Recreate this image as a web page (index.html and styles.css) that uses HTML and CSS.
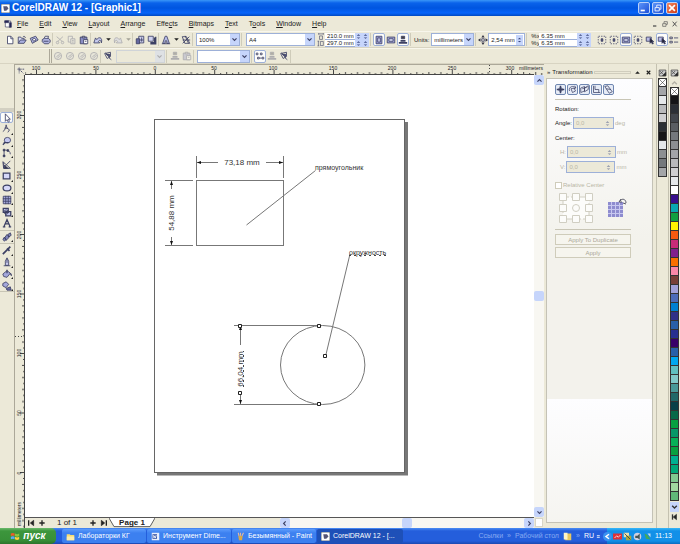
FILE: index.html
```html
<!DOCTYPE html>
<html lang="en">
<head>
<meta charset="utf-8">
<meta name="viewport" content="width=device-width, initial-scale=1">
<title>CorelDRAW 12 - [Graphic1]</title>
<link rel="stylesheet" href="styles.css">
</head>
<body>
<svg class="defs" aria-hidden="true">
  <defs>
    <symbol id="new" viewBox="0 0 12 12"><path d="M3 1.5h4l2.500 2.500v6.500H3z" fill="#fff"/><path d="M7 1.500v3h2.500"/></symbol>
    <symbol id="open" viewBox="0 0 12 12"><path d="M1.500 10V2.500h3l1 1.500h3v2" fill="#d8dcf4"/><path d="M1.500 10 4 6h7l-2.500 4z" fill="#aab0e0"/><path d="M7 2.500c1-1.500 3-1 3 1"/></symbol>
    <symbol id="save" viewBox="0 0 12 12"><path d="M1.500 4 8 1.500 11 6 4 10z" fill="#b4b8e4"/><path d="M4 5l3-1 1.500 2-3 1.500z" fill="#fff"/></symbol>
    <symbol id="print" viewBox="0 0 12 12"><path d="M3.500 5 5 1.500h4L8 5" fill="#fff"/><path d="M1.500 5.500 4 4h5l2 2v2.500L9 10.500H4L1.500 8z" fill="#b0b4e0"/><path d="M3 7.500h6"/></symbol>
    <symbol id="cut" viewBox="0 0 12 12"><path d="M2 2l7 6M9.500 2 3 8"/><circle cx="3" cy="9" r="1.500"/><circle cx="9" cy="9" r="1.500"/></symbol>
    <symbol id="copy" viewBox="0 0 12 12"><path d="M1.500 1.500h5v7h-5z" fill="#eee"/><path d="M4.500 4.500h5v6h-5zM6 6.500h2M6 8.500h2" fill="#ddd"/></symbol>
    <symbol id="paste" viewBox="0 0 12 12"><path d="M1.500 2.500h8v8h-8z" fill="#8a8ec4"/><path d="M4 1.500h3v2H4z" fill="#ccc"/><path d="M5.500 5.500h5v5h-5z" fill="#fff"/><path d="M7 7.500h2"/></symbol>
    <symbol id="undo" viewBox="0 0 12 12"><path d="M1 9.500 3 3.500l1.500 2C7 1.500 12 3 10 9.500c0-3-2-4-3.500-2L8 9.500z" fill="#c6caee"/></symbol>
    <symbol id="import" viewBox="0 0 12 12"><path d="M4.500 1.500h6v8h-6z" fill="#d0d2f0"/><path d="M1.500 4.500h4v6h-4z" fill="#6468a0"/><path d="M6 6h4M8 3v5"/></symbol>
    <symbol id="export" viewBox="0 0 12 12"><path d="M1.500 1.500h6v6h-6z" fill="#d0d2f0"/><path d="M10.500 2v8.500H4M9 3v6H4" stroke-width="1.500"/></symbol>
    <symbol id="launch" viewBox="0 0 12 12"><path d="M2 10 5 1.500h2L10 10H7V7H5v3z" fill="#b8bce8"/><path d="M1 10.500h10"/></symbol>
    <symbol id="web" viewBox="0 0 12 12"><path d="M1.500 2h5l4 8h-6zM10 2 2 10M2 6h9M5 1l4 9"/></symbol>
    <symbol id="ball" viewBox="0 0 12 12"><circle cx="6" cy="6" r="4.300" fill="#dededc"/><path d="M4 7l4-3M5 9l4-4"/></symbol>
    <symbol id="brush" viewBox="0 0 12 12"><path d="M2 3l7-1.500v5L5 9zM3 2l5 6M7 8l3 2.500"/><path d="M4 4h4v3z" fill="#444878"/></symbol>
    <symbol id="portrait" viewBox="0 0 12 12"><path d="M2.500 1.500h7v9h-7z" fill="#9ca0dc"/><path d="M4.500 3.500h3v5h-3z" fill="#d8dafa"/></symbol>
    <symbol id="landscape" viewBox="0 0 12 12"><path d="M1.500 2.500h9v7h-9z" fill="#a8ace0"/><path d="M3.500 4.500h5v3h-5z" fill="#e4e6ff"/></symbol>
    <symbol id="paper-w" viewBox="0 0 12 12"><path d="M2 1.500h8M2 0v3M10 0v3M3.500 5h5v6h-5z"/></symbol>
    <symbol id="paper-h" viewBox="0 0 12 12"><path d="M1.500 2v8M0 2h3M0 10h3M5 2.500h5v7H5z"/></symbol>
    <symbol id="pages" viewBox="0 0 12 12"><path d="M4 1.500h4v3H4z" fill="#444"/><path d="M1 9.500h10M3 7h6" stroke-width="2"/></symbol>
    <symbol id="snap" viewBox="0 0 12 12"><path d="M2 1.500h8M2 10.500h8M1.500 2v8M10.500 2v8" stroke-dasharray="1.500 1.500"/><path d="M5 4.500h2v3H5z" fill="#444878"/></symbol>
    <symbol id="pick" viewBox="0 0 12 12"><path d="M1.500 2.500h6v5h-6z" fill="#babce6"/><path d="M6 4v6l1.500-1.500L9 11l1-1-1.500-2h2z" fill="#223"/></symbol>
    <symbol id="align" viewBox="0 0 12 12"><path d="M1 2.500h3v2H1zM1 7.500h3v2H1zM6 3.500h5M6 8.500h5"/></symbol>
    <symbol id="nudge" viewBox="0 0 12 12"><path d="M6 0l2 3H4zM6 12l2-3H4zM0 6l3-2v4zM12 6 9 4v4z" fill="#334" stroke="none"/><path d="M4.500 4.500h3v3h-3z"/></symbol>
    <symbol id="nodes" viewBox="0 0 12 12"><path d="M1.500 2.500h2v2h-2zM6.500 2.500h2v2h-2zM3 7.500h2v2H3zM8.500 7.500h2v2h-2zM5 8.500h3"/></symbol>
    <symbol id="cursor" viewBox="0 0 12 12"><path d="M4 1v9l2-2 1.500 3 1.500-1-1.500-2.500H10z" fill="#fff"/></symbol>
    <symbol id="shape" viewBox="0 0 12 12"><path d="M1 9C4 8 4 4 5 1l1 4 3 2-2 3M3 5h4"/></symbol>
    <symbol id="lens" viewBox="0 0 12 12"><ellipse cx="6.500" cy="5" rx="3.800" ry="3.300" fill="#c4c8f0"/><path d="M4 7.500 1 10.500M2 8h6" stroke-width="1.500"/></symbol>
    <symbol id="curve" viewBox="0 0 12 12"><path d="M2.500 3v7M4 2.500c4 0 6 2 6 5"/><path d="M1.500 1.500h2v2h-2zM1.500 8.500h2v2h-2zM6 2h2v2H6z" fill="#334"/></symbol>
    <symbol id="smart" viewBox="0 0 12 12"><path d="M1 2l9 8H2zM4 7l6-6M2 3v7h6"/><path d="M3 6l4 4H3z" fill="#334"/></symbol>
    <symbol id="rect" viewBox="0 0 12 12"><path d="M1.500 2.500h8v7h-8z" fill="#d6d8f8" stroke-width="1.500"/></symbol>
    <symbol id="oval" viewBox="0 0 12 12"><ellipse cx="6" cy="6" rx="4.700" ry="3.500" fill="#d6d8f8" stroke-width="1.500"/></symbol>
    <symbol id="grid" viewBox="0 0 12 12"><path d="M1.500 1.500h9v9h-9z" fill="#a8ace0"/><path d="M4.500 1v10M7.500 1v10M1 4.500h10M1 7.500h10"/></symbol>
    <symbol id="shapes" viewBox="0 0 12 12"><path d="M1.500 1.500h6v5h-6zM4.500 5.500h6v5h-6z" fill="#c4c8f0" stroke-width="1.500"/><circle cx="5" cy="6" r="2.500"/></symbol>
    <symbol id="text" viewBox="0 0 12 12"><path d="M1 10.500h3M8 10.500h3M2.500 10 6 2l3.500 8M4 7h4" stroke-width="1.500"/></symbol>
    <symbol id="blend" viewBox="0 0 12 12"><path d="M1 9l2-3 2 3-2 2zM3 7l3-4 3 3-4 4zM7 3l3-2 1 3-3 2z" fill="#8084b8"/></symbol>
    <symbol id="dropper" viewBox="0 0 12 12"><path d="M1 11l6-6M6 4l3 3M7 5l3-3" stroke-width="2"/></symbol>
    <symbol id="pen" viewBox="0 0 12 12"><path d="M6 1 4 5v5h4V5zM6 2v5M2 10.500h8" fill="#c8caee"/></symbol>
    <symbol id="fill" viewBox="0 0 12 12"><path d="M1 6l5-4 4 3-4 5-4-1z" fill="#a4a8dc"/><path d="M6 1v4M10 5l1.500 3" stroke-width="1.500"/></symbol>
    <symbol id="mesh" viewBox="0 0 12 12"><path d="M1 3l4-2 3 3-3 4-4-2z" fill="#a4a8dc"/><path d="M5 9l5-2 1 4H6z" fill="#686ca8"/></symbol>
    <symbol id="plus" viewBox="0 0 12 12"><path d="M6 2v8M2 6h8" stroke-width="2"/></symbol>
    <symbol id="move" viewBox="0 0 12 12"><path d="M6 1v10M1 6h10" stroke-width="2"/><path d="M4 4h4v4H4z"/></symbol>
    <symbol id="turn" viewBox="0 0 12 12"><path d="M2 8C0 2 8 0 10 4M9 1l1.500 3-3 1M4 5l4-1 2 4-4 2z"/></symbol>
    <symbol id="scale" viewBox="0 0 12 12"><path d="M1 4l5-2v6l-5 2zM6 4l5-3v5L6 9zM3 5l6-2"/></symbol>
    <symbol id="size" viewBox="0 0 12 12"><path d="M2 1v9h9M4 1v5h5v4"/></symbol>
    <symbol id="skew" viewBox="0 0 12 12"><path d="M1 2l4-1 6 8-4 2zM3 5l6 1"/></symbol>
    <symbol id="down" viewBox="0 0 12 12"><path d="M2.500 4 6 7.500 9.500 4" stroke-width="2"/></symbol>
    <symbol id="tri" viewBox="0 0 12 12"><path d="M2 4h8L6 8z" fill="#222" stroke="none"/></symbol>
    <symbol id="flyout" viewBox="0 0 12 12"><path d="M1 1.500h10v9H1zM2 3l5 5M7 3 2 8" fill="#ccc"/><path d="M6 10h5V5z" fill="#222"/></symbol>
    <symbol id="none" viewBox="0 0 12 12"><path d="M0 0l12 12M12 0 0 12"/></symbol>
    <symbol id="app" viewBox="0 0 12 12"><path d="M0 0h12v12H0z" fill="#fff" stroke="#345"/><path d="M3 3h5l2 3-3 3H4z" fill="#557" stroke="none"/></symbol>
    <symbol id="spin" viewBox="0 0 12 12"><path d="M3 4.500 6 2l3 2.500zM3 7.500 6 10l3-2.500z" fill="#3c4a80" stroke="none"/></symbol>
  </defs>
</svg>

<header class="titlebar">
  <svg class="app-icon"><use href="#app"/></svg>
  <h1>CorelDRAW 12 - [Graphic1]</h1>
  <div class="window-buttons">
    <button aria-label="Minimize"><svg viewBox="0 0 12 12"><path d="M2 9h5" stroke-width="2"/></svg></button>
    <button aria-label="Restore"><svg viewBox="0 0 12 12"><path d="M4.500 5V2.500h5v5H7.500M2.500 5.500h5v4h-5z"/></svg></button>
    <button class="close" aria-label="Close"><svg viewBox="0 0 12 12"><path d="M2.500 2.500l7 7M9.500 2.500l-7 7" stroke-width="2"/></svg></button>
  </div>
</header>

<nav class="menubar">
  <svg class="icon doc-icon" viewBox="0 0 12 12"><path d="M2 1.500h8v9H2z" fill="#fff"/><path d="M1 1h6v3H1zM8 4h3v7H8z" fill="#225"/></svg>
  <a href="#"><u>F</u>ile</a><a href="#"><u>E</u>dit</a><a href="#"><u>V</u>iew</a><a href="#"><u>L</u>ayout</a><a href="#"><u>A</u>rrange</a><a href="#">Effe<u>c</u>ts</a><a href="#"><u>B</u>itmaps</a><a href="#"><u>T</u>ext</a><a href="#">T<u>o</u>ols</a><a href="#"><u>W</u>indow</a><a href="#"><u>H</u>elp</a>
  <div class="mdi-buttons">
    <button aria-label="Minimize document"><svg class="icon" viewBox="0 0 12 12"><path d="M3 9h5" stroke-width="2"/></svg></button>
    <button aria-label="Restore document"><svg class="icon" viewBox="0 0 12 12"><path d="M4.500 5V2.500h5v4H7.500M2.500 5.500h5v4h-5z"/></svg></button>
    <button aria-label="Close document"><svg class="icon" viewBox="0 0 12 12"><path d="M2.500 2.500l6 7M8.500 2.500l-6 7" stroke-width="1.500"/></svg></button>
  </div>
</nav>

<div class="toolbar">
  <button aria-label="New"><svg class="icon"><use href="#new"/></svg></button>
  <button aria-label="Open"><svg class="icon"><use href="#open"/></svg></button>
  <button aria-label="Save"><svg class="icon"><use href="#save"/></svg></button>
  <button aria-label="Print"><svg class="icon"><use href="#print"/></svg></button>
  <i class="sep"></i>
  <button class="off" aria-label="Cut"><svg class="icon"><use href="#cut"/></svg></button>
  <button class="off" aria-label="Copy"><svg class="icon"><use href="#copy"/></svg></button>
  <button aria-label="Paste"><svg class="icon"><use href="#paste"/></svg></button>
  <i class="sep"></i>
  <button aria-label="Undo"><svg class="icon"><use href="#undo"/></svg></button>
  <button class="narrow" aria-label="Undo list"><svg class="icon"><use href="#tri"/></svg></button>
  <button class="off flip" aria-label="Redo"><svg class="icon"><use href="#undo"/></svg></button>
  <button class="narrow off" aria-label="Redo list"><svg class="icon"><use href="#tri"/></svg></button>
  <i class="sep"></i>
  <button aria-label="Import"><svg class="icon"><use href="#import"/></svg></button>
  <button aria-label="Export"><svg class="icon"><use href="#export"/></svg></button>
  <i class="sep"></i>
  <button aria-label="Application launcher"><svg class="icon"><use href="#launch"/></svg></button>
  <button class="narrow" aria-label="Launcher list"><svg class="icon"><use href="#tri"/></svg></button>
  <button aria-label="Corel on the web"><svg class="icon"><use href="#web"/></svg></button>
  <i class="sep"></i>
  <label class="combo zoom"><select aria-label="Zoom level"><option>100%</option></select><span><svg class="icon"><use href="#down"/></svg></span></label>
  <i class="sep gap"></i>
  <label class="combo paper"><select aria-label="Paper type"><option>A4</option></select><span><svg class="icon"><use href="#down"/></svg></span></label>
  <div class="stack">
    <label><svg class="icon"><use href="#paper-w"/></svg><input value="210.0 mm" aria-label="Paper width"><svg class="spin"><use href="#spin"/></svg><svg class="spin"><use href="#spin"/></svg></label>
    <label><svg class="icon"><use href="#paper-h"/></svg><input value="297.0 mm" aria-label="Paper height"><svg class="spin"><use href="#spin"/></svg><svg class="spin"><use href="#spin"/></svg></label>
  </div>
  <i class="sep gap"></i>
  <button class="pressed" aria-label="Portrait"><svg class="icon"><use href="#portrait"/></svg></button>
  <button aria-label="Landscape"><svg class="icon"><use href="#landscape"/></svg></button>
  <button class="pressed" aria-label="Default page"><svg class="icon"><use href="#pages"/></svg></button>
  <i class="sep gap"></i>
  <label class="caption" for="units">Units:</label>
  <div class="combo units"><select id="units"><option>millimeters</option></select><span><svg class="icon"><use href="#down"/></svg></span></div>
  <i class="sep gap"></i>
  <label class="nudge"><svg class="icon"><use href="#nudge"/></svg><span class="field"><input value="2,54 mm" aria-label="Nudge offset"><svg class="spin"><use href="#spin"/></svg></span></label>
  <i class="sep gap"></i>
  <div class="stack wide">
    <label><span class="axis">%x</span><input value="6.35 mm" aria-label="Duplicate distance x"><svg class="spin"><use href="#spin"/></svg><svg class="spin"><use href="#spin"/></svg></label>
    <label><span class="axis">%y</span><input value="6.35 mm" aria-label="Duplicate distance y"><svg class="spin"><use href="#spin"/></svg><svg class="spin"><use href="#spin"/></svg></label>
  </div>
  <div class="tail">
    <button aria-label="Snap to grid"><svg class="icon"><use href="#snap"/></svg></button>
    <button aria-label="Snap to guidelines"><svg class="icon"><use href="#snap"/></svg></button>
    <button class="pressed" aria-label="Snap to objects"><svg class="icon"><use href="#landscape"/></svg></button>
    <button aria-label="Dynamic guides"><svg class="icon"><use href="#snap"/></svg></button>
    <button aria-label="Draw complex objects"><svg class="icon"><use href="#pick"/></svg></button>
    <button class="pressed" aria-label="Treat as filled"><svg class="icon"><use href="#pick"/></svg></button>
    <button aria-label="Options"><svg class="icon"><use href="#align"/></svg></button>
  </div>
</div>

<div class="toolbar second">
  <div class="empty"></div>
  <button class="off" aria-label="Fill color"><svg class="icon"><use href="#ball"/></svg></button>
  <button class="off" aria-label="Outline color"><svg class="icon"><use href="#ball"/></svg></button>
  <button class="off" aria-label="Contour"><svg class="icon"><use href="#ball"/></svg></button>
  <button class="off" aria-label="Shadow"><svg class="icon"><use href="#ball"/></svg></button>
  <i class="sep"></i>
  <button aria-label="Brush"><svg class="icon"><use href="#brush"/></svg></button>
  <label class="combo preset off"><select aria-label="Preset" disabled><option></option></select><span><svg class="icon"><use href="#down"/></svg></span></label>
  <i class="sep gap"></i>
  <button class="off" aria-label="Add preset"><svg class="icon"><use href="#pages"/></svg></button>
  <button class="off" aria-label="Delete preset"><svg class="icon"><use href="#paste"/></svg></button>
  <i class="sep"></i>
  <label class="combo style"><select aria-label="Style"><option></option></select><span><svg class="icon"><use href="#down"/></svg></span></label>
  <i class="sep gap"></i>
  <button class="pressed" aria-label="Node labels"><svg class="icon"><use href="#nodes"/></svg></button>
  <button class="off" aria-label="Break link"><svg class="icon"><use href="#pages"/></svg></button>
  <button aria-label="Edit link"><svg class="icon"><use href="#brush"/></svg></button>
  <i class="sep"></i>
</div>

<main class="workspace">
  <aside class="toolbox">
    <div class="handle"></div>
    <div class="tools">
      <button class="pressed" aria-label="Pick"><svg class="icon"><use href="#cursor"/></svg></button>
      <button class="more" aria-label="Shape"><svg class="icon"><use href="#shape"/></svg></button>
      <button class="more" aria-label="Zoom"><svg class="icon"><use href="#lens"/></svg></button>
      <button class="more" aria-label="Freehand"><svg class="icon"><use href="#curve"/></svg></button>
      <button aria-label="Smart drawing"><svg class="icon"><use href="#smart"/></svg></button>
      <button class="more" aria-label="Rectangle"><svg class="icon"><use href="#rect"/></svg></button>
      <button class="more" aria-label="Ellipse"><svg class="icon"><use href="#oval"/></svg></button>
      <button class="more" aria-label="Graph paper"><svg class="icon"><use href="#grid"/></svg></button>
      <button class="more" aria-label="Basic shapes"><svg class="icon"><use href="#shapes"/></svg></button>
      <button aria-label="Text"><svg class="icon"><use href="#text"/></svg></button>
      <hr>
      <button class="more" aria-label="Interactive blend"><svg class="icon"><use href="#blend"/></svg></button>
      <hr>
      <button class="more" aria-label="Eyedropper"><svg class="icon"><use href="#dropper"/></svg></button>
      <button class="more" aria-label="Outline"><svg class="icon"><use href="#pen"/></svg></button>
      <button class="more" aria-label="Fill"><svg class="icon"><use href="#fill"/></svg></button>
      <button class="more" aria-label="Interactive fill"><svg class="icon"><use href="#mesh"/></svg></button>
    </div>
    <hr>
  </aside>

  <section class="document">
    <div class="origin"><svg class="icon" viewBox="0 0 12 12"><path d="M5 3v7M3 5h8M5 5l5 5" stroke-dasharray="2 1"/></svg></div>
    <svg class="ruler-top" aria-label="Horizontal ruler">
      <defs>
        <pattern id="ticks-x" x="11" width="59.400" height="10" patternUnits="userSpaceOnUse">
          <path d="M.5 5v5M6.500 8v2M12.500 7v3M18.500 8v2M24.500 7v3M30.500 8v2M36.500 7v3M42.500 8v2M48.500 7v3M54.500 8v2"/>
        </pattern>
      </defs>
      <rect width="100%" height="10" fill="url(#ticks-x)"/>
      <path d="M464.500 0v10" stroke-dasharray="1 2"/>
      <path d="M0 9.500h509"/>
      <g><text x="11" y="5">100</text><text x="71" y="5">50</text><text x="130" y="5">0</text><text x="189" y="5">50</text><text x="248" y="5">100</text><text x="308" y="5">150</text><text x="367" y="5">200</text><text x="427" y="5">250</text><text x="485" y="5">300</text><text x="506" y="5">millimeters</text></g>
    </svg>
    <svg class="ruler-left" aria-label="Vertical ruler">
      <defs>
        <pattern id="ticks-y" y="40" width="10" height="59.500" patternUnits="userSpaceOnUse">
          <path d="M5 .5h5M8 6.500h2M7 12.500h3M8 18.500h2M7 24.500h3M8 30.500h2M7 36.500h3M8 42.500h2M7 48.500h3M8 54.500h2"/>
        </pattern>
      </defs>
      <rect width="10" height="100%" fill="url(#ticks-y)"/>
      <path d="M0 261.500h10" stroke-dasharray="1 2"/>
      <path d="M9.500 0v2000"/>
      <g transform="rotate(-90)"><text x="-40" y="6">300</text><text x="-100" y="6">250</text><text x="-160" y="6">200</text><text x="-219" y="6">150</text><text x="-278" y="6">100</text><text x="-338" y="6">50</text><text x="-398" y="6">0</text><text x="-439" y="6">millimeters</text></g>
    </svg>

    <svg class="canvas" aria-label="Drawing page">
      <g transform="translate(-25 -75)">
        <path class="shadow" d="M157 474h249.500V122"/>
        <rect class="page" x="154.500" y="119.500" width="250" height="353"/>
        <g class="ink">
          <rect x="196.500" y="180.500" width="87" height="65"/>
          <path d="M196.500 156v22M283.500 156v22M197 162.500h21M266 162.500h18M165 180.500h28M165 245.500h28M171.500 181v8M171.500 237v8"/>
          <path class="solid" d="M197 162.500l4-1.500v3zM283 162.500l-4-1.500v3zM171.500 181l-1.500 4h3zM171.500 245l-1.500-4h3z"/>
          <path d="M315.500 170.500 246.500 225"/>
          <ellipse cx="322.700" cy="365" rx="42.200" ry="39.500"/>
          <path d="M234 325.500h85M234 404.500h85M240.500 327v18M240.500 393v11M325.500 356.500 350 254"/>
          <path class="solid" d="M240.500 326l-1.500 4h3zM240.500 404l-1.500-4h3z"/>
          <path class="node" d="M238.500 324.500h3v3h-3zM317.500 324.500h3v3h-3zM317.500 402.500h3v3h-3zM238.500 391.500h3v3h-3zM323.500 354.500h3v3h-3z"/>
        </g>
        <text class="size" x="242" y="165">73,18 mm</text>
        <text class="size" transform="translate(174 213) rotate(-90)">54,88 mm</text>
        <text class="size" transform="translate(243 369) rotate(-90)">66,04 mm</text>
        <text class="note" x="315" y="170">прямоугольник</text>
        <text class="note" x="349" y="255">окружность</text>
        <path class="marks" d="M349 255.500h40M243.500 387v-36"/>
      </g>
    </svg>

    <div class="scroll vertical">
      <button aria-label="Scroll up"><svg class="icon up"><use href="#down"/></svg></button>
      <i class="thumb"></i>
      <button aria-label="Scroll down"><svg class="icon"><use href="#down"/></svg></button>
    </div>

    <footer class="pages">
      <button aria-label="First page"><svg class="icon" viewBox="0 0 12 12"><path d="M2.500 2v8" stroke-width="2"/><path d="M10 2v8L5 6z" fill="#222"/></svg></button>
      <button aria-label="Add page before"><svg class="icon"><use href="#plus"/></svg></button>
      <span class="count">1 of 1</span>
      <button aria-label="Add page after"><svg class="icon"><use href="#plus"/></svg></button>
      <button aria-label="Last page"><svg class="icon" viewBox="0 0 12 12"><path d="M9.500 2v8" stroke-width="2"/><path d="M2 2v8l5-4z" fill="#222"/></svg></button>
      <button class="tab"><svg viewBox="0 0 46 11" preserveAspectRatio="none"><path d="M0 0l5 9.500h36L46 0" fill="#fff"/></svg><span>Page 1</span></button>
      <div class="scroll horizontal">
        <button aria-label="Scroll left"><svg class="icon left"><use href="#down"/></svg></button>
        <i class="thumb"></i>
        <button aria-label="Scroll right"><svg class="icon right"><use href="#down"/></svg></button>
      </div>
    </footer>
    <button class="navigator" aria-label="Navigator"></button>
  </section>

  <aside class="docker">
    <header><span>»</span><h2>Transformation</h2><i></i>
      <button aria-label="Collapse"><svg class="icon up"><use href="#tri"/></svg></button>
      <button aria-label="Close docker"><svg class="icon" viewBox="0 0 12 12"><path d="M3 3l6 6M9 3 3 9" stroke-width="2"/></svg></button>
    </header>
    <form class="panel">
      <div class="kinds">
        <button type="button" aria-label="Position"><svg class="icon"><use href="#move"/></svg></button>
        <button type="button" aria-label="Rotate"><svg class="icon"><use href="#turn"/></svg></button>
        <button type="button" aria-label="Scale and mirror"><svg class="icon"><use href="#scale"/></svg></button>
        <button type="button" aria-label="Size"><svg class="icon"><use href="#size"/></svg></button>
        <button type="button" aria-label="Skew"><svg class="icon"><use href="#skew"/></svg></button>
      </div>
      <hr>
      <h3>Rotation:</h3>
      <div class="row"><label for="angle">Angle:</label><span class="field"><input id="angle" value="0,0" disabled><svg class="spin"><use href="#spin"/></svg></span><span class="dim">deg</span></div>
      <h3>Center:</h3>
      <div class="row inset"><label class="dim" for="ch">H:</label><span class="field"><input id="ch" value="0,0" disabled><svg class="spin"><use href="#spin"/></svg></span><span class="dim">mm</span></div>
      <div class="row inset"><label class="dim" for="cv">V:</label><span class="field"><input id="cv" value="0,0" disabled><svg class="spin"><use href="#spin"/></svg></span><span class="dim">mm</span></div>
      <label class="check dim"><input type="checkbox" disabled>Relative Center</label>
      <div class="anchor">
        <svg class="anchors" viewBox="0 0 34 30" aria-label="Anchor points"><path d="M4 4h26v22H4z" stroke-dasharray="6 2"/><path d="M.5.5h7v7h-7zM13.500.5h7v7h-7zM26.500.5h7v7h-7zM.5 11.500h7v7h-7zM26.500 11.500h7v7h-7zM.5 22.500h7v7h-7zM13.500 22.500h7v7h-7zM26.500 22.500h7v7h-7z"/><circle cx="17" cy="15" r="3.500"/></svg>
        <svg class="preview" viewBox="0 0 20 20" aria-hidden="true"><path d="M1 4h15v15H1z" fill="#8e8ccf"/><path class="mesh" d="M1 7.500h15M1 11.500h15M1 15.500h15M4.500 4v15M8.500 4v15M12.500 4v15"/><path d="M13 3c2-3 6-2 6 2M19 6l-3-1M14 1l-2 3h3" stroke="#556"/></svg>
      </div>
      <hr>
      <button class="apply" type="button" disabled>Apply To Duplicate</button>
      <button class="apply" type="button" disabled>Apply</button>
    </form>
  </aside>

  <aside class="palette short">
    <button aria-label="Document palette menu"><svg class="icon"><use href="#flyout"/></svg></button>
    <ul>
      <li class="c-none"><svg><use href="#none"/></svg></li><li class="g7"></li><li class="g10"></li><li class="g8"></li><li class="g9"></li><li class="g2"></li><li class="g1"></li><li class="g10"></li><li class="g6"></li><li class="g5"></li><li class="g7"></li>
    </ul>
  </aside>
  <aside class="palette">
    <button aria-label="Default palette menu"><svg class="icon"><use href="#flyout"/></svg></button>
    <button class="scroll-up" aria-label="Palette up"><svg class="icon up"><use href="#down"/></svg></button>
    <ul>
      <li class="c-none"><svg><use href="#none"/></svg></li>
      <li class="g1"></li><li class="g2"></li><li class="g3"></li><li class="g4"></li><li class="g5"></li><li class="g6"></li><li class="g7"></li><li class="g8"></li><li class="g9"></li><li class="g10"></li><li class="white"></li>
      <li class="indigo"></li><li class="cyan"></li><li class="green"></li><li class="yellow"></li><li class="red"></li><li class="magenta"></li><li class="purple"></li><li class="orange"></li><li class="pink"></li><li class="brown"></li><li class="lavender"></li>
      <li class="b1"></li><li class="b2"></li><li class="b3"></li><li class="b4"></li><li class="b5"></li><li class="b6"></li><li class="b4"></li><li class="b7"></li>
      <li class="t1"></li><li class="t2"></li><li class="t3"></li><li class="t4"></li><li class="t5"></li><li class="t6"></li>
      <li class="e1"></li><li class="e2"></li><li class="e3"></li><li class="e1"></li><li class="e4"></li><li class="e5"></li><li class="e6"></li><li class="e7"></li><li class="e8"></li>
    </ul>
    <button class="blue" aria-label="Palette down"><svg class="icon"><use href="#down"/></svg></button>
    <button aria-label="Expand palette"><svg class="icon" viewBox="0 0 12 12"><path d="M3 2v8" stroke-width="2"/><path d="M9 2v8L4 6z" fill="#222"/></svg></button>
  </aside>
</main>

<footer class="taskbar">
  <button class="start"><svg viewBox="0 0 12 12" aria-hidden="true"><path d="M1 3c2-1 3-1 4.500 0v3C4 5 3 5 1 6z" fill="#f05a28"/><path d="M6 3c2 1 3 1 5 0v3c-2 1-3 1-5 0z" fill="#8cc63f"/><path d="M1 7c2-1 3-1 4.500 0v3C4 9 3 9 1 10z" fill="#58a8f8"/><path d="M6 7c2 1 3 1 5 0v3c-2 1-3 1-5 0z" fill="#fcd13a"/></svg>пуск</button>
  <button class="task"><svg viewBox="0 0 12 12" aria-hidden="true"><path d="M1 3h4l1 1h5v7H1z" fill="#f8dc70"/><path d="M1 6h10v5H1z" fill="#fcecaa"/></svg>Лабораторки КГ</button>
  <button class="task"><svg viewBox="0 0 12 12" aria-hidden="true"><path d="M1 1h10v10H1z" fill="#e8eefc"/><path d="M2 3h6v6H2z" fill="#2c4aa0"/><path d="M3 4l1 4 1-3 1 3 1-4" fill="none" stroke="#fff"/></svg>Инструмент Dime...</button>
  <button class="task"><svg viewBox="0 0 12 12" aria-hidden="true"><path d="M3 5h6l-1 6H4z" fill="#d8a848"/><path d="M4 5 3 1M6 5V1M8 5l2-4" fill="none" stroke="#e0b8a0" stroke-width="1.500"/></svg>Безымянный - Paint</button>
  <button class="task active"><svg aria-hidden="true"><use href="#app"/></svg>CorelDRAW 12 - [...</button>
  <div class="bars"><span>Ссылки</span><span>»</span><span>Рабочий стол</span><svg viewBox="0 0 12 12" aria-hidden="true"><path d="M3 2h8v9H3z" fill="#e8c860"/><path d="M1 1h5v9H1z" fill="#fff4c8"/></svg><span>»</span></div>
  <span class="lang">RU</span>
  <svg class="lang-mark" viewBox="0 0 12 12" aria-hidden="true"><path d="M2 4h7M2 8h7" fill="none" stroke="#fff" stroke-width="2"/></svg>
  <div class="tray">
    <svg class="round" viewBox="0 0 12 12" aria-hidden="true"><circle cx="6" cy="6" r="6" fill="#3a92f0"/><path d="M8 3 4 6l4 3" fill="none" stroke="#fff" stroke-width="2"/></svg>
    <svg viewBox="0 0 12 12" aria-hidden="true"><path d="M0 2h12v8H0z" fill="#dc3038"/><path d="M2 8l3-3 2 2 3-3" fill="none" stroke="#fff"/></svg>
    <svg viewBox="0 0 12 12" aria-hidden="true"><path d="M1 1h7v6H1z" fill="#e8e0b0"/><path d="M4 5h7v6H4z" fill="#a8a840"/><path d="M2 2l8 8" stroke="#333"/></svg>
    <svg viewBox="0 0 12 12" aria-hidden="true"><circle cx="6" cy="6" r="5" fill="#d0d0e0"/><path d="M3 5h3l3-3v8L6 8H3z" fill="#455"/></svg>
    <svg viewBox="0 0 12 12" aria-hidden="true"><path d="M2 2l4 2 4 6-6-1z" fill="#44a858"/><path d="M6 2h4v5z" fill="#cde"/></svg>
    <time>11:13</time>
  </div>
</footer>
</body>
</html>
```
FILE: styles.css
```css
:root {
  --face: #ece9d8;
  --line: #aca899;
  --blue-edge: #9db0d8;
  --scroll: #c6d5fb;
  --dim: #b9b6a6;
}

* { box-sizing: border-box; }

body {
  margin: 0;
  min-height: 100vh;
  display: flex;
  flex-direction: column;
  overflow: hidden;
  background: var(--face);
  color: #222;
  font: 6px/8px "Liberation Sans", Arial, sans-serif;
}

.defs { position: absolute; width: 0; height: 0; }

button, input, select {
  margin: 0;
  padding: 0;
  border: 0;
  border-radius: 0;
  background: none;
  color: inherit;
  font: inherit;
}

button {
  display: flex;
  align-items: center;
  justify-content: center;
  flex: none;
}

svg { display: block; flex: none; }
h1, h2, h3, ul { margin: 0; padding: 0; font: inherit; }
a { color: inherit; text-decoration: none; }
hr { margin: 0; border: 0; border-top: 1px solid #c8c5b5; }

.icon {
  width: 10px;
  height: 10px;
  fill: none;
  stroke: #3c4064;
}

.up { transform: rotate(180deg); }
.left { transform: rotate(90deg); }
.right { transform: rotate(-90deg); }
.flip .icon { transform: scaleX(-1); }
.off { opacity: .35; }

/* Title and menu */
.titlebar {
  height: 16px;
  display: flex;
  align-items: center;
  gap: 2px;
  padding: 0 2px 0 1px;
  background: linear-gradient(#3a96f8 0, #0a62ea 3px, #0055e0 8px, #0664fa 13px, #0048c0 16px);
  color: #fff;
}
.titlebar h1 { font-size: 10px; line-height: 14px; font-weight: bold; }
.app-icon { width: 9px; height: 9px; }
.window-buttons { margin-left: auto; display: flex; gap: 2px; }
.window-buttons button {
  width: 12px;
  height: 12px;
  border: 1px solid #b8d0f8;
  border-radius: 2px;
  background: linear-gradient(135deg, #5c94f8, #1c50d8);
}
.window-buttons .close { background: linear-gradient(135deg, #f08860, #d03c18); }
.window-buttons svg { width: 10px; height: 10px; fill: none; stroke: #fff; }

.menubar {
  height: 15px;
  display: flex;
  align-items: center;
  gap: 11px;
  padding: 0 0 0 4px;
  font-size: 7px;
}
.menubar .doc-icon { width: 8px; margin-right: -6px; }
.mdi-buttons { margin-left: auto; display: flex; }
.mdi-buttons button { width: 10px; }
.mdi-buttons .icon { width: 8px; height: 8px; stroke: #555; }

/* Toolbars */
.toolbar {
  height: 17px;
  display: flex;
  align-items: center;
  padding-left: 4px;
  border-top: 1px solid #f8f6ec;
  border-bottom: 1px solid #d8d4c2;
}
.toolbar button { width: 12px; height: 13px; }
.toolbar .narrow { width: 8px; }
.narrow .icon { width: 7px; height: 7px; }
.toolbar.second { height: 16px; padding-left: 0; }
.second .empty { width: 52px; height: 14px; border-right: 3px double var(--line); }
.sep { flex: none; width: 2px; height: 13px; border-left: 1px solid #cfccba; }
.sep.gap { margin: 0 1px; }

.pressed {
  border: 1px solid var(--blue-edge);
  border-radius: 2px;
  background: #fdfdfb;
}

.combo {
  flex: none;
  display: flex;
  height: 13px;
  margin-left: 2px;
  border: 1px solid var(--blue-edge);
  background: #fff;
}
.combo select { flex: 1; min-width: 0; padding-left: 2px; appearance: none; }
.combo span { flex: none; width: 9px; display: flex; align-items: center; justify-content: center; background: var(--scroll); }
.combo .icon { width: 7px; height: 7px; }
.zoom { width: 44px; }
.paper { width: 69px; }
.units { width: 43px; }
.preset { width: 49px; background: none; }
.style { width: 53px; }

.stack { flex: none; width: 52px; margin-left: 2px; }
.stack.wide { width: 60px; }
.stack label { display: flex; align-items: center; height: 7px; }
.stack .icon { width: 8px; height: 7px; }
.stack input { flex: 1; min-width: 0; height: 7px; padding-left: 2px; background: #fff; border-bottom: 1px solid var(--blue-edge); }
.axis { width: 8px; }
.spin { width: 7px; height: 7px; background: var(--scroll); }
.caption { margin-left: 1px; }
.nudge { display: flex; align-items: center; }
.field { display: flex; align-items: center; height: 13px; padding-right: 1px; border: 1px solid var(--blue-edge); background: #fff; }
.field input { flex: 1; min-width: 0; padding-left: 2px; }
.nudge .field { width: 37px; }
.nudge .field .spin { height: 10px; }
.tail { display: flex; margin-left: auto; }

/* Workspace */
.workspace { flex: 1; display: flex; min-height: 0; }

.toolbox { flex: none; width: 14px; padding-top: 44px; }
.handle { height: 4px; background: #d3d0c2; }
.tools { display: flex; flex-direction: column; justify-content: space-between; height: 179px; }
.tools button { position: relative; width: 13px; height: 11px; }
.tools .more::after {
  content: "";
  position: absolute;
  right: 0;
  bottom: 0;
  border: 1px solid #222;
  border-top-color: transparent;
  border-left-color: transparent;
}

.document {
  flex: 1;
  min-width: 0;
  display: grid;
  grid-template: 10px minmax(0, 1fr) 11px / 10px minmax(0, 1fr) 10px;
  border-top: 1px solid var(--line);
  border-left: 1px solid var(--line);
}
.ruler-top { grid-column: 2 / 4; width: 100%; height: 10px; }
.ruler-left { grid-row: 2 / 4; width: 10px; height: 100%; }
.ruler-top path, .ruler-left path { stroke: #444; fill: none; }
.ruler-top text, .ruler-left text { font-size: 5px; text-anchor: middle; fill: #222; }

.canvas { width: 100%; height: 100%; background: #fff; overflow: hidden; }
.page { fill: #fff; stroke: #666; }
.shadow { fill: none; stroke: #777; stroke-width: 3; }
.ink { fill: none; stroke: #777; }
.ink .solid { fill: #111; stroke: none; }
.ink .node { fill: #fff; stroke: #222; }
.marks { stroke: #444; stroke-dasharray: 2 3; }
.size { font-size: 8px; text-anchor: middle; fill: #333; }
.note { font-size: 7px; fill: #333; }

.scroll { display: flex; justify-content: space-between; align-items: center; background: #f8f7f2; }
.scroll button { width: 10px; height: 10px; border-radius: 2px; background: var(--scroll); }
.scroll .icon { width: 7px; height: 7px; }
.thumb { width: 10px; height: 10px; border-radius: 2px; background: var(--scroll); }
.vertical { flex-direction: column; }

.pages { display: flex; align-items: center; min-width: 0; border-top: 1px solid #555; font-size: 8px; }
.pages > button .icon { width: 8px; height: 8px; stroke: #222; }
.pages > button { width: 11px; height: 10px; }
.count { width: 40px; text-align: center; }
.pages .tab { position: relative; width: 46px; font-weight: bold; }
.tab svg { position: absolute; inset: 0; width: 100%; height: 100%; stroke: #555; }
.tab span { position: relative; }
.horizontal { width: 50%; margin-left: auto; height: 10px; }
.navigator { margin: 1px; background: #fff; border: 1px solid #d8d5c8; }

/* Docker */
.docker { flex: none; width: 112px; padding: 2px 3px 5px 2px; display: flex; flex-direction: column; }
.docker header { height: 12px; display: flex; align-items: center; gap: 2px; padding-left: 1px; }
.docker header i { flex: 1; height: 3px; border: 1px solid #d0cdbd; }
.docker header button { width: 9px; }
.docker header .icon { width: 7px; height: 7px; stroke: #222; }
.panel {
  flex: 1;
  padding: 5px 21px 0 8px;
  border: 1px solid #c4c2b6;
  background: linear-gradient(#fdfdff, #f3f2ec 50%) 0 0 / 100% 320px;
}
.kinds { display: flex; gap: 1px; margin-bottom: 4px; }
.kinds button { width: 11px; height: 11px; border: 1px solid #6f86b0; border-radius: 2px; background: #e6ebf6; }
.kinds .icon { width: 9px; height: 9px; }
.panel h3 { margin: 5px 0 4px; }
.row { display: flex; align-items: center; gap: 1px; }
.row .field { width: 41px; height: 12px; background: var(--face); color: var(--dim); }
.row .spin { width: 9px; background: none; opacity: .6; }
.inset { padding-left: 5px; margin-bottom: 3px; }
.inset .field { width: 49px; }
.dim { color: var(--dim); }
.check { display: flex; align-items: center; gap: 1px; margin: 8px 0 4px; }
.check input { appearance: none; width: 7px; height: 7px; border: 1px solid #cfccba; background: #fff; }
.anchor { display: flex; align-items: center; gap: 14px; margin: 0 0 6px 4px; }
.anchors { width: 34px; height: 30px; fill: #fcfcfa; stroke: #d0cec2; }
.preview { width: 20px; height: 20px; fill: none; }
.preview .mesh { stroke: #c8c8f0; }
.apply { width: 100%; height: 11px; margin-top: 2px; border: 1px solid #cfccba; background: #f6f5ee; color: #aaa798; }
hr + .apply { margin-top: 4px; }

/* Palettes */
.palette { flex: none; width: 12px; padding: 4px 1px 0; border-left: 1px solid #c4c1b0; display: flex; flex-direction: column; }
.palette button { height: 10px; }
.palette .icon { width: 9px; height: 8px; stroke: #333; }
.palette .scroll-up { height: 9px; opacity: .3; }
.palette .blue { background: var(--scroll); margin-top: 1px; }
.palette ul { list-style: none; border: 1px solid #333; border-width: 0 1px; }
.palette li { height: 9px; border-bottom: 1px solid #333; }
.palette .c-none { background: #fff; border-top: 1px solid #333; }
.c-none svg { width: 100%; height: 7px; stroke: #333; }
.g1 { background: #151517; } .g2 { background: #2b2f35; } .g3 { background: #42464c; }
.g4 { background: #5a5e62; } .g5 { background: #74787c; } .g6 { background: #8c8f92; }
.g7 { background: #a3a5a8; } .g8 { background: #b9babc; } .g9 { background: #cfcfd1; }
.g10 { background: #e5e8ea; } .white { background: #fff; }
.indigo { background: #38108c; } .cyan { background: #08a8b0; } .green { background: #10a040; }
.yellow { background: #fff200; } .red { background: #f45a10; } .magenta { background: #c82c78; }
.purple { background: #80208c; } .orange { background: #f87000; } .pink { background: #f888a8; }
.brown { background: #784038; } .lavender { background: #a0a0d8; }
.b1 { background: #4c6cb8; } .b2 { background: #0080d0; } .b3 { background: #303088; }
.b4 { background: #2860a8; } .b5 { background: #283090; } .b6 { background: #380068; } .b7 { background: #00a8f0; }
.t1 { background: #60c0c0; } .t2 { background: #80c8c8; } .t3 { background: #489898; }
.t4 { background: #206868; } .t5 { background: #084048; } .t6 { background: #086848; }
.e1 { background: #08a040; } .e2 { background: #089868; } .e3 { background: #08b058; }
.e4 { background: #00b090; } .e5 { background: #00a878; } .e6 { background: #80c890; }
.e7 { background: #a0d8a0; } .e8 { background: #60b878; }

/* Taskbar */
.taskbar {
  height: 16px;
  display: flex;
  align-items: center;
  background: linear-gradient(#4a8cf4 0, #245edc 3px, #245edc 13px, #1c48b0 16px);
  color: #fff;
  font-size: 7px;
}
.taskbar svg { width: 9px; height: 9px; }
.start {
  width: 56px;
  height: 16px;
  gap: 3px;
  margin-right: 6px;
  border-radius: 0 5px 5px 0;
  background: linear-gradient(#6cba6c 0, #3c963c 3px, #389038 12px, #2c742c 16px);
  font: italic bold 10px/14px "Liberation Sans", Arial, sans-serif;
}
.start svg { width: 10px; height: 10px; }
.task {
  flex: 0 1 84px;
  min-width: 0;
  height: 14px;
  justify-content: flex-start;
  gap: 3px;
  margin-right: 1px;
  padding-left: 4px;
  border-radius: 2px;
  background: linear-gradient(#5c9cfc, #3c80f0 4px);
  white-space: nowrap;
}
.task.active { flex-basis: 86px; background: #1e50b8; }
.bars { margin-left: auto; display: flex; align-items: center; gap: 4px; color: #86aaf2; }
.lang { margin-left: 4px; }
.taskbar .lang-mark { width: 5px; margin-left: 2px; }
.tray { height: 16px; display: flex; align-items: center; gap: 1px; margin-left: 6px; padding-right: 8px; background: linear-gradient(#38b8f8 0, #1290e8 3px, #1290e8 13px, #0c6cc0 16px); }
.tray .round { margin-left: -4px; }
.tray time { margin-left: 2px; }
```
